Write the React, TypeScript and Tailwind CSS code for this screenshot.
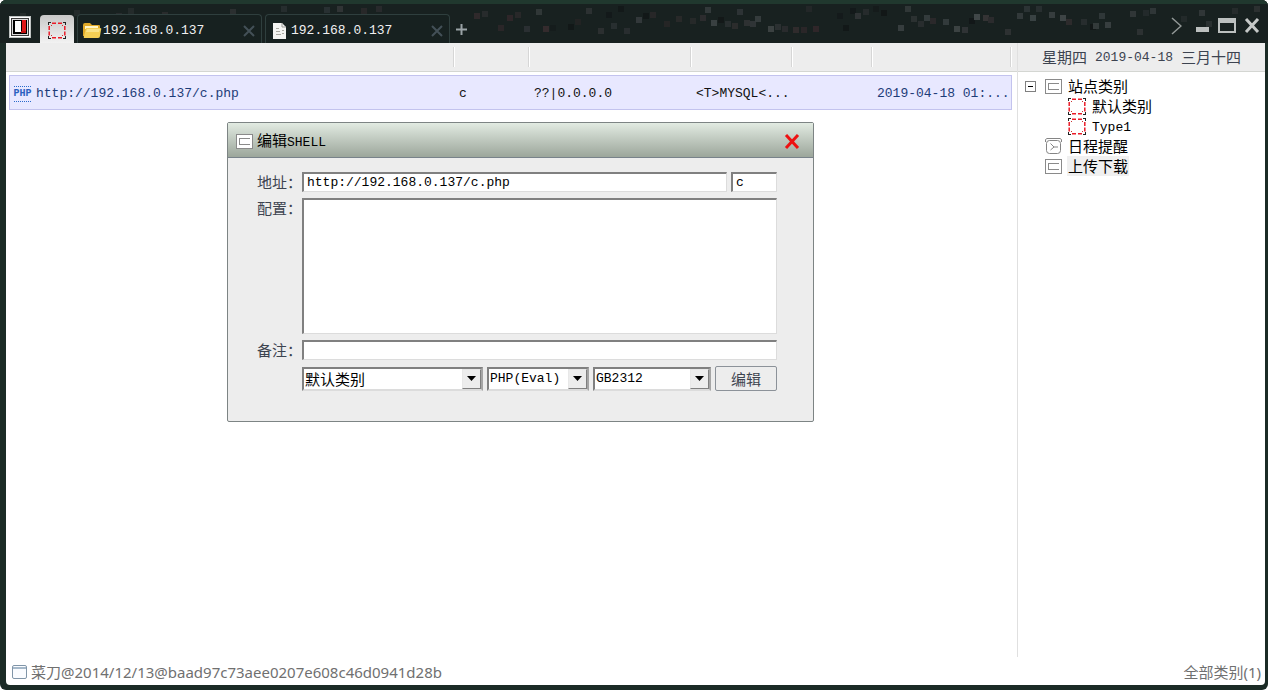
import { useState } from "react";
import type { ReactNode } from "react";

type Shell = {
  url: string;
  password: string;
  address: string;
  config: string;
  updatedAt: string;
};

const shells: Shell[] = [
  {
    url: "http://192.168.0.137/c.php",
    password: "c",
    address: "??|0.0.0.0",
    config: "<T>MYSQL<...",
    updatedAt: "2019-04-18 01:...",
  },
];

// x, y, color of the little squares scattered over the title bar
const specks: [number, number, string][] = [
  [20, 12, "#2b3131"], [74, 9, "#2a3030"], [116, 12, "#2f3033"], [128, 7, "#2a3030"], [162, 11, "#313032"],
  [230, 8, "#343638"], [281, 5, "#2c3334"], [324, 6, "#30373a"], [337, 5, "#3b3d3f"], [361, 7, "#2f2b2d"],
  [376, 5, "#302f32"], [474, 12, "#3a2d30"], [482, 10, "#2e3032"], [498, 24, "#33292c"], [507, 14, "#38292d"],
  [515, 11, "#2f2c2e"], [524, 25, "#33363a"], [536, 8, "#3b4142"], [543, 25, "#403033"], [550, 24, "#151a1b"],
  [568, 23, "#101516"], [575, 18, "#272425"], [586, 7, "#35383a"], [598, 27, "#343638"], [606, 11, "#121718"],
  [611, 22, "#303638"], [618, 5, "#111617"], [624, 27, "#303336"], [636, 16, "#3d4345"], [643, 12, "#101516"],
  [650, 11, "#2e2a2c"], [664, 20, "#2b2828"], [676, 15, "#302d2e"], [690, 17, "#2d2d2e"], [700, 14, "#353234"],
  [705, 6, "#3d4446"], [711, 19, "#484e50"], [718, 16, "#111516"], [725, 20, "#2f3436"], [732, 22, "#343232"],
  [737, 8, "#363c3e"], [744, 19, "#38383a"], [750, 20, "#3a3d40"], [755, 15, "#414648"], [768, 25, "#4a4f50"],
  [775, 23, "#343739"], [782, 25, "#313033"], [793, 26, "#3a3032"], [801, 26, "#33292c"], [813, 25, "#39292e"],
  [806, 5, "#292a2c"], [837, 12, "#131819"], [843, 24, "#101516"], [850, 7, "#121718"], [855, 12, "#393c3e"],
  [863, 8, "#2c3032"], [873, 5, "#15191a"], [881, 9, "#101414"], [905, 5, "#3b4142"], [898, 24, "#44494b"],
  [911, 15, "#343839"], [918, 20, "#2f3335"], [924, 14, "#3f4648"], [930, 17, "#332c2f"], [943, 18, "#3e4547"],
  [954, 25, "#4a5051"], [962, 26, "#393c3e"], [969, 17, "#101415"], [974, 13, "#525859"], [983, 14, "#403b3d"],
  [988, 16, "#343033"], [1005, 28, "#36393b"], [1017, 12, "#3d4446"], [1024, 5, "#343b3d"], [1030, 14, "#485052"],
  [1036, 5, "#2f3537"], [1049, 11, "#434a4c"], [1060, 14, "#4d5355"], [1066, 18, "#363032"], [1081, 18, "#2e3335"],
  [1090, 23, "#101314"], [1093, 22, "#3f4546"], [1099, 12, "#3a4143"], [1105, 21, "#454b4d"], [1130, 10, "#3b4042"],
  [1137, 28, "#35393b"], [1143, 9, "#292e30"], [1150, 7, "#394042"], [1181, 15, "#292e2f"], [1199, 9, "#3b4042"],
  [1206, 20, "#323839"], [1232, 7, "#2b3031"], [1254, 5, "#343738"],
];

const mono = "font-['Liberation_Mono','Noto_Sans_CJK_SC',monospace]";
const cjk = "font-['Noto_Sans_CJK_SC',sans-serif]";
const sunken =
  "border border-t-2 border-l-2 border-t-[#808080] border-l-[#808080] border-r-[#dcdcdc] border-b-[#dcdcdc] bg-white outline-none";

function Specks() {
  return (
    <svg
      className="pointer-events-none absolute inset-0 h-full w-full opacity-70"
      shapeRendering="crispEdges"
      aria-hidden="true"
    >
      {specks.map(([x, y, fill]) => (
        <rect key={`${x}-${y}`} x={x} y={y - 3} width="6" height="6" fill={fill} />
      ))}
    </svg>
  );
}

function AppIcon() {
  return (
    <svg width="22" height="22" viewBox="0 0 22 22" shapeRendering="crispEdges" aria-hidden="true">
      <rect width="22" height="22" fill="#bfc3c2" />
      <rect x="1" y="1" width="20" height="20" fill="#fff" />
      <rect x="2" y="2" width="18" height="18" fill="#3a3a3a" />
      <rect x="3" y="3" width="16" height="16" fill="#dcdcdc" />
      <rect x="4" y="4" width="14" height="14" fill="#000" />
      <rect x="6" y="5" width="6" height="11" fill="#fff" />
      <rect x="13" y="4" width="4" height="11" fill="#e01919" />
      <rect x="12" y="15" width="5" height="2" fill="#c01010" />
    </svg>
  );
}

function RedFrameIcon() {
  return (
    <svg width="18" height="17" viewBox="0 0 18 17" fill="none" aria-hidden="true">
      <path
        d="M4 1.200h4M10 1.200h4M4 15.800h4M10 15.800h4M1.200 4v4M1.200 9.500v4M16.800 4v4M16.800 9.500v4"
        stroke="#ea1c28"
        strokeWidth="1.500"
      />
      <path d="M0 .5h3M15 .5h3M0 16.500h3M15 16.500h3M.5 0v3M17.500 0v3M.5 14v3M17.500 14v3" stroke="#222" />
      <path d="M3 3h1v1H3zM14 3h1v1h-1zM3 13h1v1H3zM14 13h1v1h-1z" fill="#c33" />
    </svg>
  );
}

function BoxIcon() {
  return (
    <svg width="17" height="15" viewBox="0 0 17 15" fill="none" shapeRendering="crispEdges" aria-hidden="true">
      <rect x=".5" y=".5" width="16" height="14" fill="#fff" stroke="#8a8a8a" />
      <path d="M14 4.5H3.5v6H14" stroke="#8a8a8a" />
    </svg>
  );
}

function ClockIcon() {
  return (
    <svg width="17" height="17" viewBox="0 0 17 17" fill="none" stroke="#858585" aria-hidden="true">
      <path d="M.5 4V1.500L2 .5h13l1.500 1V4" />
      <rect x="1.500" y="2.500" width="14" height="13" rx="3" />
      <path d="M5.500 5.500l3.500 3.500-3.500 3M9 9h4" />
    </svg>
  );
}

function FolderIcon() {
  return (
    <svg width="20" height="17" viewBox="0 0 20 17" aria-hidden="true">
      <path d="M1 14V3q0-2 2-2h5l2 2h7q1 0 1 1v10z" fill="#e0a928" />
      <path d="M3 4h13v3H3z" fill="#fff5c7" />
      <path d="M4 6h14q2 0 1 2l-1 6q0 2-2 2H3q-2 0-1-2z" fill="#f5cf55" />
      <path d="M5 7h13l-1 3H4z" fill="#fae389" />
    </svg>
  );
}

function PageIcon() {
  return (
    <svg width="14" height="16" viewBox="0 0 14 16" aria-hidden="true">
      <path d="M0 0h9l4 4v12H0z" fill="#f4f4f2" />
      <path d="M9 0v4h4" fill="none" stroke="#9a9a96" />
      <path d="M3 5.500h3M3 8.500h4M3 11.500h5M9 7.500h2M9 10.500h2" stroke="#aaa9a2" />
    </svg>
  );
}

function WindowIcon() {
  return (
    <svg width="15" height="14" viewBox="0 0 15 14" fill="none" stroke="#8095a8" aria-hidden="true">
      <rect x=".5" y=".5" width="14" height="13" rx="1.500" fill="#fafcff" />
      <path d="M1 2.500h13M1 3.500h13" stroke="#a6b9ca" />
    </svg>
  );
}

function PhpIcon() {
  return (
    <span className="flex h-4 w-[17px] shrink-0 items-center justify-center border-y border-dotted border-[#2b6ccc] font-['Liberation_Mono',monospace] text-[10px] font-bold text-[#2b5fc0]">
      PHP
    </span>
  );
}

function Tab({ icon, label }: { icon: ReactNode; label: string }) {
  return (
    <div className="flex h-[29px] w-[185px] items-center rounded-t border border-b-0 border-[#2f3f3e] bg-[#172120] pt-[3px] pl-[3px] pr-[5px]">
      <span className="flex w-[22px] justify-center">{icon}</span>
      <button type="button" className="flex-1 text-left text-[13px] text-[#f0f0f0]">
        {label}
      </button>
      <button type="button" aria-label="关闭标签">
        <svg width="14" height="14" viewBox="0 0 14 14" stroke="#435057" strokeWidth="2" aria-hidden="true">
          <path d="M2 2l10 10M12 2L2 12" />
        </svg>
      </button>
    </div>
  );
}

function TitleBar() {
  return (
    <header className="relative flex h-[43px] shrink-0 items-end overflow-hidden border-t-4 border-[#20382e] bg-[#182120]">
      <Specks />
      <div className="relative flex flex-1 items-end pl-[9px]">
        <div className="mb-[5px]">
          <AppIcon />
        </div>
        <button
          type="button"
          aria-label="站点列表"
          className="ml-[9px] flex h-7 w-[34px] items-center justify-center rounded-t-sm bg-linear-to-b from-[#c8c8c8] to-[#f2f2f2] pt-[2px]"
        >
          <RedFrameIcon />
        </button>
        <div className="ml-[3px] flex gap-[3px]">
          <Tab icon={<FolderIcon />} label="192.168.0.137" />
          <Tab icon={<PageIcon />} label="192.168.0.137" />
        </div>
        <button type="button" aria-label="新建标签" className="mb-2 ml-[6px]">
          <svg width="11" height="11" viewBox="0 0 11 11" stroke="#9aa3a6" strokeWidth="2" aria-hidden="true">
            <path d="M5.500 0v11M0 5.500h11" />
          </svg>
        </button>
      </div>
      <div className="relative mb-2 flex items-center gap-2 pr-2">
        <button type="button" aria-label="更多" className="mr-[6px]">
          <svg width="11" height="18" viewBox="0 0 11 18" fill="none" stroke="#929897" strokeWidth="1.500" aria-hidden="true">
            <path d="M1 1l9 8-9 8" />
          </svg>
        </button>
        <button type="button" aria-label="最小化">
          <svg width="14" height="16" viewBox="0 0 14 16" aria-hidden="true">
            <rect y="9" width="13" height="5" fill="#bcc0bf" />
          </svg>
        </button>
        <button type="button" aria-label="最大化">
          <svg width="18" height="16" viewBox="0 0 18 16" fill="#bcc0bf" fillRule="evenodd" aria-hidden="true">
            <path d="M0 0h18v15H0zM2 5v8h14V5z" />
          </svg>
        </button>
        <button type="button" aria-label="关闭">
          <svg width="16" height="16" viewBox="0 0 16 16" stroke="#c5c8c7" strokeWidth="3" aria-hidden="true">
            <path d="M2 1l12 13M14 1L2 14" />
          </svg>
        </button>
      </div>
    </header>
  );
}

function HeaderCell() {
  return (
    <th className="border-b border-[#d4d6d2] bg-[#ededed] p-0">
      <div className="ml-auto h-5 w-[2px] border-l border-[#d6d6d6] bg-white" />
    </th>
  );
}

function ShellTable() {
  const cell =
    "h-[35px] overflow-hidden whitespace-nowrap border-y border-[#c3c3ee] bg-[#e8e8ff] p-0 pt-[2px] pl-1 text-left";
  return (
    <table className="w-full table-fixed border-separate border-spacing-0 text-[13px]">
      <colgroup>
        <col className="w-[3px]" />
        <col />
        <col className="w-[75px]" />
        <col className="w-[162px]" />
        <col className="w-[101px]" />
        <col className="w-20" />
        <col className="w-[139px]" />
        <col className="w-[5px]" />
      </colgroup>
      <thead>
        <tr className="h-[29px]">
          <th className="border-b border-[#d4d6d2] bg-[#ededed] p-0" />
          <HeaderCell />
          <HeaderCell />
          <HeaderCell />
          <HeaderCell />
          <HeaderCell />
          <HeaderCell />
          <th className="border-b border-[#d4d6d2] bg-[#ededed] p-0" />
        </tr>
      </thead>
      <tbody className="before:block before:h-[3px]">
        {shells.map((shell) => (
          <tr key={shell.url}>
            <td className="p-0" />
            <td className={`${cell} border-l text-[#1d3c78]`}>
              <div className="flex items-center gap-[5px]">
                <PhpIcon />
                {shell.url}
              </div>
            </td>
            <td className={`${cell} text-[#111]`}>{shell.password}</td>
            <td className={`${cell} text-[#111]`}>{shell.address}</td>
            <td className={`${cell} text-[#111]`}>{shell.config}</td>
            <td className={cell} />
            <td className={`${cell} border-r text-[#1d3c78]`}>{shell.updatedAt}</td>
            <td className="p-0" />
          </tr>
        ))}
      </tbody>
    </table>
  );
}

function TreeItem({ icon, label, highlighted = false }: { icon: ReactNode; label: ReactNode; highlighted?: boolean }) {
  return (
    <div className="flex h-5 items-center gap-[5px]">
      <span className="flex w-[18px] justify-center">{icon}</span>
      <span className={`px-px text-[15px] leading-5 text-black ${cjk} ${highlighted ? "bg-[#f0f0f0]" : ""}`}>{label}</span>
    </div>
  );
}

function Sidebar() {
  return (
    <aside className="w-[248px] shrink-0 border-l border-[#e0e0e0]">
      <div className="flex h-[29px] items-center justify-center gap-2 border-b border-[#d4d6d2] bg-[#ededed] text-[15px] text-[#3c4350]">
        <span className={cjk}>星期四</span>
        <span className="pt-[2px] text-[13px]">2019-04-18</span>
        <span className={cjk}>三月十四</span>
      </div>
      <ul className="pt-1 pl-[26px]">
        <li className="relative">
          <button
            type="button"
            aria-label="折叠"
            className="absolute top-[5px] -left-[19px] flex h-[11px] w-[11px] items-center justify-center border border-[#808080] bg-white"
          >
            <span className="h-px w-[5px] bg-black" />
          </button>
          <TreeItem icon={<BoxIcon />} label="站点类别" />
          <ul className="pl-6">
            <li>
              <TreeItem icon={<RedFrameIcon />} label="默认类别" />
            </li>
            <li>
              <TreeItem icon={<RedFrameIcon />} label={<span className={`text-[13px] ${mono}`}>Type1</span>} />
            </li>
          </ul>
        </li>
        <li>
          <TreeItem icon={<ClockIcon />} label="日程提醒" />
        </li>
        <li>
          <TreeItem icon={<BoxIcon />} label="上传下载" highlighted />
        </li>
      </ul>
    </aside>
  );
}

function SelectBox({ label, options, className }: { label: string; options: string[]; className: string }) {
  return (
    <div className={`relative flex ${className}`}>
      <select
        aria-label={label}
        className="h-6 w-full appearance-none border-2 border-t-[#808080] border-l-[#808080] border-r-[#a5a5a5] border-b-[#dcdcdc] bg-white pr-5 pl-px leading-5 text-black outline-none"
      >
        {options.map((option) => (
          <option key={option}>{option}</option>
        ))}
      </select>
      <span className="pointer-events-none absolute top-[2px] right-[2px] flex h-5 w-[19px] items-center justify-center border border-r-[#808080] border-b-[#808080] border-t-[#e8e8e8] border-l-[#e8e8e8] bg-[#ededed]">
        <svg width="9" height="5" viewBox="0 0 9 5" aria-hidden="true">
          <path d="M0 0h9L4.500 5z" fill="#000" />
        </svg>
      </span>
    </div>
  );
}

function EditDialog({ onClose }: { onClose: () => void }) {
  const [url, setUrl] = useState(shells[0].url);
  const [password, setPassword] = useState(shells[0].password);
  const [config, setConfig] = useState("");
  const [note, setNote] = useState("");
  const label = `w-[45px] shrink-0 text-[15px] leading-5 text-[#3d4450] ${cjk}`;

  return (
    <section
      role="dialog"
      aria-labelledby="dialog-title"
      className="absolute top-[122px] left-[227px] w-[587px] rounded-xs border border-[#7d8484] bg-[#ededed]"
    >
      <div className="flex h-[35px] items-center gap-1 border-b border-[#78828a] bg-linear-to-b from-[#e2ebe2] to-[#9ca69b] pr-[13px] pl-2 pt-[3px]">
        <BoxIcon />
        <h2 id="dialog-title" className={`flex-1 text-[15px] leading-5 text-black ${cjk}`}>
          编辑<span className={`text-[13px] ${mono}`}>SHELL</span>
        </h2>
        <button type="button" aria-label="关闭" onClick={onClose}>
          <svg width="16" height="16" viewBox="0 0 16 16" stroke="#ee1111" strokeWidth="3" aria-hidden="true">
            <path d="M2 1l12 13M14 1L2 14" />
          </svg>
        </button>
      </div>
      <form className="flex flex-col gap-[6px] pt-[14px] pr-9 pb-[30px] pl-[29px]" onSubmit={(e) => e.preventDefault()}>
        <div className="flex items-center">
          <label htmlFor="url" className={label}>
            地址：
          </label>
          <div className="flex flex-1 gap-1">
            <input
              id="url"
              value={url}
              onChange={(e) => setUrl(e.target.value)}
              autoFocus
              className={`h-5 min-w-0 flex-1 pl-[3px] text-[13px] text-black ${sunken}`}
            />
            <input
              aria-label="密码"
              value={password}
              onChange={(e) => setPassword(e.target.value)}
              className={`h-5 w-[46px] pl-[3px] text-[13px] text-black ${sunken}`}
            />
          </div>
        </div>
        <div className="flex">
          <label htmlFor="config" className={label}>
            配置：
          </label>
          <textarea
            id="config"
            value={config}
            onChange={(e) => setConfig(e.target.value)}
            className={`h-[136px] flex-1 resize-none text-[13px] ${sunken}`}
          />
        </div>
        <div className="flex items-center">
          <label htmlFor="note" className={label}>
            备注：
          </label>
          <input
            id="note"
            value={note}
            onChange={(e) => setNote(e.target.value)}
            className={`h-5 min-w-0 flex-1 text-[13px] ${sunken}`}
          />
        </div>
        <div className="flex items-center gap-1 pl-[45px]">
          <SelectBox label="类别" options={["默认类别"]} className={`flex-1 text-[15px] ${cjk}`} />
          <SelectBox label="脚本类型" options={["PHP(Eval)"]} className="w-[102px] text-[13px]" />
          <SelectBox label="编码" options={["GB2312"]} className="w-[118px] text-[13px]" />
          <button
            type="submit"
            className={`h-[25px] w-[62px] rounded-xs border border-[#8c9299] bg-[#ededed] text-[15px] leading-5 text-[#3d4450] ${cjk}`}
          >
            编辑
          </button>
        </div>
      </form>
    </section>
  );
}

function StatusBar() {
  return (
    <footer className="flex h-7 shrink-0 items-center justify-between pt-[2px] pr-1 pl-[6px] font-['Noto_Sans','Noto_Sans_CJK_SC',sans-serif] text-[15px] text-[#707070]">
      <div className="flex items-center gap-1">
        <WindowIcon />
        <span>菜刀@2014/12/13@baad97c73aee0207e608c46d0941d28b</span>
      </div>
      <span>全部类别(1)</span>
    </footer>
  );
}

export default function App() {
  const [dialogOpen, setDialogOpen] = useState(true);

  return (
    <div
      className={`relative flex min-h-screen flex-col overflow-hidden rounded-md bg-[#1b2b26] pb-[5px] ${mono}`}
    >
      <TitleBar />
      <div className="mr-[3px] ml-[6px] flex flex-1 flex-col rounded-b-sm bg-white">
        <main className="flex flex-1">
          <div className="min-w-0 flex-1">
            <ShellTable />
          </div>
          <Sidebar />
        </main>
        <StatusBar />
      </div>
      {dialogOpen && <EditDialog onClose={() => setDialogOpen(false)} />}
    </div>
  );
}
